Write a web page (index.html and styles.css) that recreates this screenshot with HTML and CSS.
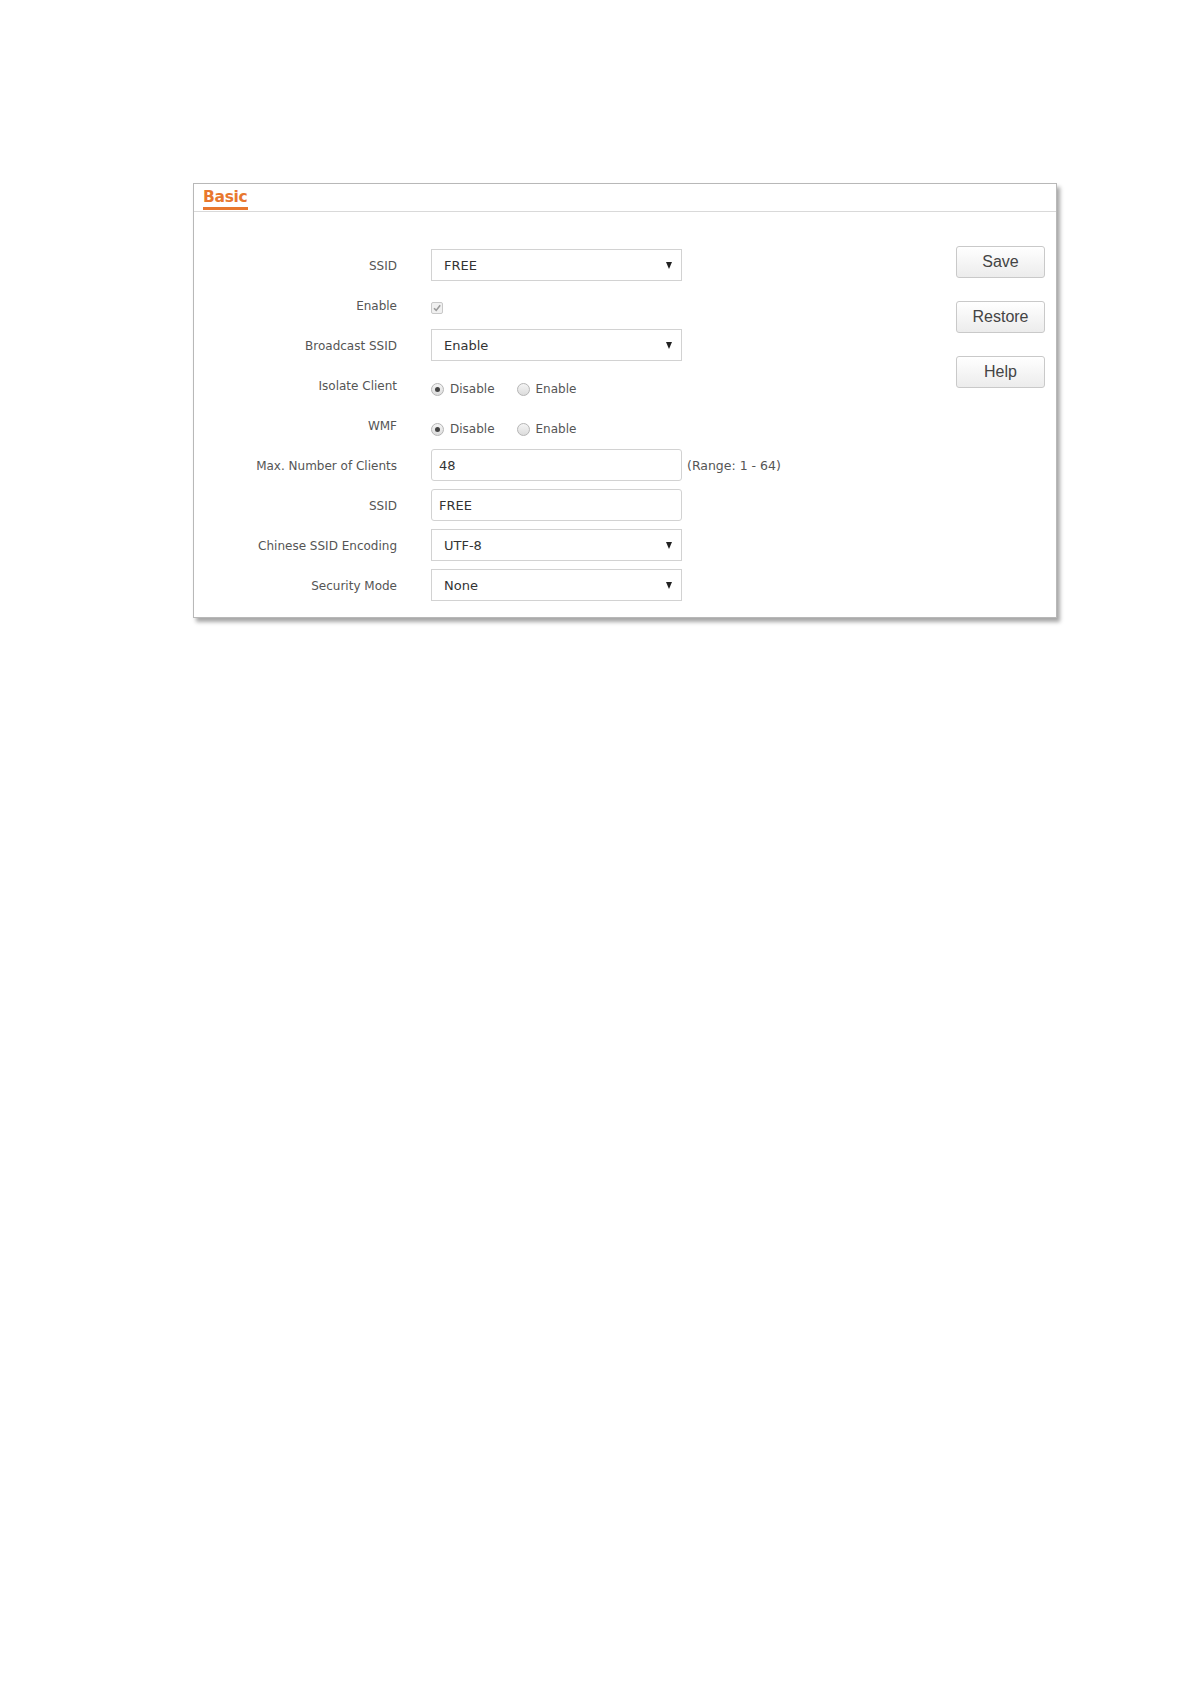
FILE: index.html
```html
<!DOCTYPE html>
<html>
<head>
<meta charset="utf-8">
<link rel="stylesheet" href="styles.css">
</head>
<body>
<div class="panel">
  <div class="panel-head"><span class="tab">Basic</span></div>
  <div class="panel-body">
    <div class="form">
      <div class="row"><div class="label">SSID</div><div class="ctrl"><div class="select"><span class="val">FREE</span><span class="arrow"></span></div></div></div>
      <div class="row"><div class="label">Enable</div><div class="ctrl"><span class="checkbox"><svg width="10" height="10" viewBox="0 0 10 10"><path d="M2 5.2 L4.2 7.4 L8.2 2.2" fill="none" stroke="#9a9a9a" stroke-width="1.6"/></svg></span></div></div>
      <div class="row"><div class="label">Broadcast SSID</div><div class="ctrl"><div class="select"><span class="val">Enable</span><span class="arrow"></span></div></div></div>
      <div class="row"><div class="label">Isolate Client</div><div class="ctrl radios"><span class="radio on"></span><span class="rtext">Disable</span><span class="radio"></span><span class="rtext">Enable</span></div></div>
      <div class="row"><div class="label">WMF</div><div class="ctrl radios"><span class="radio on"></span><span class="rtext">Disable</span><span class="radio"></span><span class="rtext">Enable</span></div></div>
      <div class="row"><div class="label">Max. Number of Clients</div><div class="ctrl"><div class="input">48</div><span class="hint">(Range: 1 - 64)</span></div></div>
      <div class="row"><div class="label">SSID</div><div class="ctrl"><div class="input">FREE</div></div></div>
      <div class="row"><div class="label">Chinese SSID Encoding</div><div class="ctrl"><div class="select"><span class="val">UTF-8</span><span class="arrow"></span></div></div></div>
      <div class="row"><div class="label">Security Mode</div><div class="ctrl"><div class="select"><span class="val">None</span><span class="arrow"></span></div></div></div>
    </div>
    <div class="buttons">
      <button class="btn">Save</button>
      <button class="btn">Restore</button>
      <button class="btn">Help</button>
    </div>
  </div>
</div>
</body>
</html>
```
FILE: styles.css
```css
html, body { margin: 0; padding: 0; background: #fff; }
body { width: 1191px; height: 1684px; font-family: "DejaVu Sans", Verdana, sans-serif; }
.panel {
  margin: 183px 0 0 193px;
  width: 862px;
  border: 1px solid #b8b8b8;
  background: #fff;
  box-shadow: 3px 4px 4px rgba(0,0,0,0.35);
}
.panel-head {
  height: 27px;
  border-bottom: 1px solid #d9d9d9;
  padding-left: 9px;
  display: flex;
  align-items: flex-start;
}
.tab {
  margin-top: 5px;
  font-family: "DejaVu Sans", sans-serif;
  font-weight: bold;
  font-size: 15.5px;
  letter-spacing: -0.3px;
  line-height: 16px;
  color: #e8772e;
  padding-bottom: 2px;
  border-bottom: 3px solid #e8772e;
}
.panel-body {
  display: flex;
  padding: 33px 0 12px 0;
}
.form { width: 700px; }
.row { display: flex; align-items: center; height: 40px; }
.label {
  width: 203px;
  text-align: right;
  font-size: 12px;
  color: #555;
  margin-right: 34px;
  padding-top: 2px;
}
.ctrl { display: flex; align-items: center; }
.select {
  box-sizing: border-box;
  width: 251px;
  height: 32px;
  border: 1px solid #d2d2d2;
  display: flex;
  align-items: center;
  justify-content: space-between;
  padding: 0 9px 0 12px;
  font-size: 13px;
  color: #333;
}
.arrow {
  width: 0; height: 0;
  border-left: 3.5px solid transparent;
  border-right: 3.5px solid transparent;
  border-top: 7px solid #222;
  margin-top: 1px;
}
.input {
  box-sizing: border-box;
  width: 251px;
  height: 32px;
  border: 1px solid #d2d2d2;
  border-radius: 3px;
  display: flex;
  align-items: center;
  padding-left: 7px;
  font-size: 13px;
  color: #333;
}
.hint { margin-left: 5px; font-size: 12.5px; color: #555; }
.checkbox {
  box-sizing: border-box;
  width: 12px; height: 12px;
  border: 1px solid #c8c8c8;
  border-radius: 2px;
  background: #f0f0f0;
  display: flex; align-items: center; justify-content: center;
  margin-top: 6px;
}
.radios { margin-top: 8px; }
.radio {
  box-sizing: border-box;
  width: 13px; height: 13px;
  border-radius: 50%;
  border: 1px solid #b5b5b5;
  background: linear-gradient(#f4f4f4, #dcdcdc);
  display: inline-flex; align-items: center; justify-content: center;
}
.radio.on::after {
  content: "";
  width: 5px; height: 5px; border-radius: 50%;
  background: #444;
}
.rtext { font-size: 12px; color: #555; margin-left: 6px; margin-right: 22px; }
.buttons {
  margin-left: 62px;
  display: flex;
  flex-direction: column;
  gap: 23px;
  padding-top: 1px;
}
.btn {
  box-sizing: border-box;
  width: 89px;
  height: 32px;
  border: 1px solid #c9c9c9;
  border-radius: 3px;
  background: linear-gradient(#ffffff, #ececec);
  font-family: "Liberation Sans", Arial, sans-serif;
  font-size: 16px;
  color: #444;
  padding: 0;
  margin: 0;
}
```
